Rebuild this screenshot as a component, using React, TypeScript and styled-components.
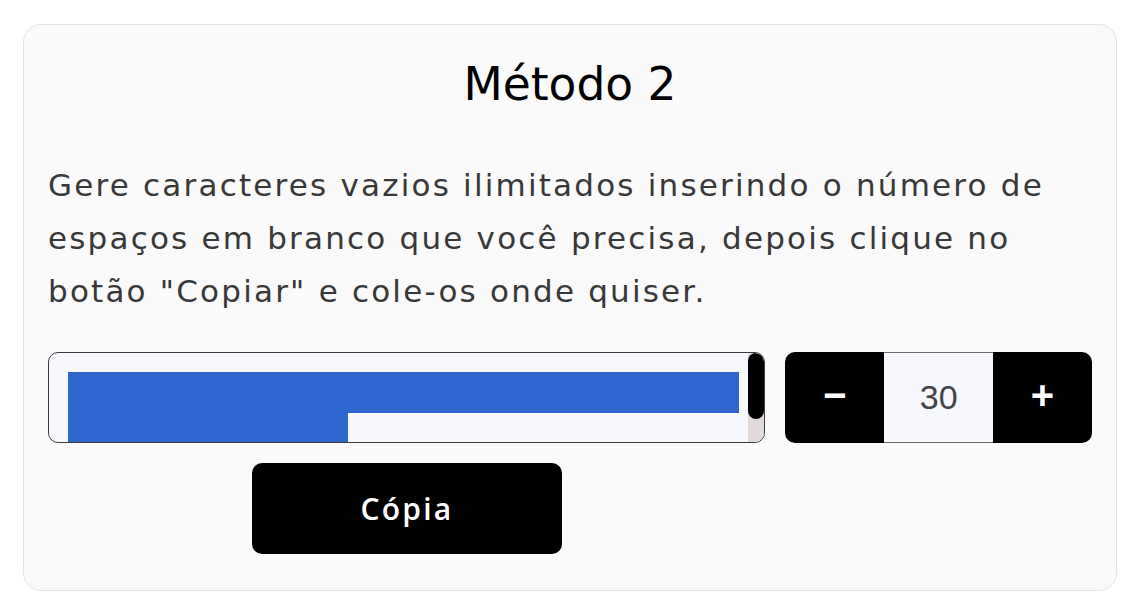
import React from "react";
import styled, { createGlobalStyle } from "styled-components";

const Global = createGlobalStyle`
  html, body { margin: 0; padding: 0; background: #ffffff; }
  body { font-family: "DejaVu Sans", "Open Sans", sans-serif; }
  * { box-sizing: border-box; }
`;

const Page = styled.div`
  padding: 24px 9px 9px 23px;
`;

const Card = styled.section`
  width: 1094px;
  height: 567px;
  background: #fafafa;
  border: 1px solid #e4e4e4;
  border-radius: 18px;
  padding: 28px 24px 0 24px;
  display: flex;
  flex-direction: column;
`;

const Title = styled.h2`
  margin: 0;
  text-align: center;
  font-family: "DejaVu Sans", sans-serif;
  font-size: 45.5px;
  line-height: 64px;
  font-weight: 400;
  color: #000;
`;

const Text = styled.p`
  margin: 42px 0 0 0;
  font-family: "DejaVu Sans", sans-serif;
  font-size: 31px;
  line-height: 53px;
  letter-spacing: 2.2px;
  color: #383838;
  font-weight: 400;
`;

const Controls = styled.div`
  display: flex;
  gap: 20px;
  margin-top: 34px;
`;

const TextBox = styled.div`
  width: 718px;
  height: 91px;
  border: 1px solid #3c3c3c;
  border-radius: 10px;
  background: #f7f8fd;
  overflow: hidden;
  display: flex;
`;

const TextContent = styled.div`
  flex: 1;
  padding: 19px 0 0 19px;
  display: flex;
  flex-direction: column;
`;

const Selection = styled.div<{ $w: number }>`
  height: 41px;
  width: ${(p) => p.$w}px;
  background: #3066d0;
  flex-shrink: 0;
`;

const ScrollTrack = styled.div`
  width: 16px;
  background: #e2dada;
  display: flex;
  flex-direction: column;
`;

const ScrollThumb = styled.div`
  height: 66px;
  background: #000;
  border-radius: 8px;
`;

const Counter = styled.div`
  width: 307px;
  height: 91px;
  display: flex;
  border-radius: 10px;
  overflow: hidden;
`;

const StepButton = styled.button`
  width: 99px;
  height: 100%;
  border: none;
  background: #000;
  color: #fff;
  font-family: "Liberation Sans", Arial, sans-serif;
  font-weight: 700;
  font-size: 40px;
  display: flex;
  align-items: center;
  justify-content: center;
  padding: 0 0 4px 0;
  cursor: pointer;
`;

const Value = styled.div`
  flex: 1;
  background: #f7f8fd;
  border-top: 1px solid #6a6a6a;
  border-bottom: 1px solid #6a6a6a;
  display: flex;
  align-items: center;
  justify-content: center;
  font-family: "Liberation Sans", Arial, sans-serif;
  font-size: 34px;
  color: #444;
`;

const CopyButton = styled.button`
  margin: 20px 0 0 204px;
  width: 310px;
  height: 91px;
  border: none;
  border-radius: 10px;
  background: #000;
  color: #fff;
  font-family: "Open Sans", "Noto Sans", sans-serif;
  font-weight: 600;
  font-size: 30px;
  letter-spacing: 2.2px;
  cursor: pointer;
`;

export default function App() {
  return (
    <>
      <Global />
      <Page>
        <Card>
          <Title>Método 2</Title>
          <Text>
            Gere caracteres vazios ilimitados inserindo o número de espaços em
            branco que você precisa, depois clique no botão "Copiar" e cole-os
            onde quiser.
          </Text>
          <Controls>
            <TextBox>
              <TextContent>
                <Selection $w={671} />
                <Selection $w={280} />
              </TextContent>
              <ScrollTrack>
                <ScrollThumb />
              </ScrollTrack>
            </TextBox>
            <Counter>
              <StepButton>−</StepButton>
              <Value>30</Value>
              <StepButton>+</StepButton>
            </Counter>
          </Controls>
          <CopyButton>Cópia</CopyButton>
        </Card>
      </Page>
    </>
  );
}
